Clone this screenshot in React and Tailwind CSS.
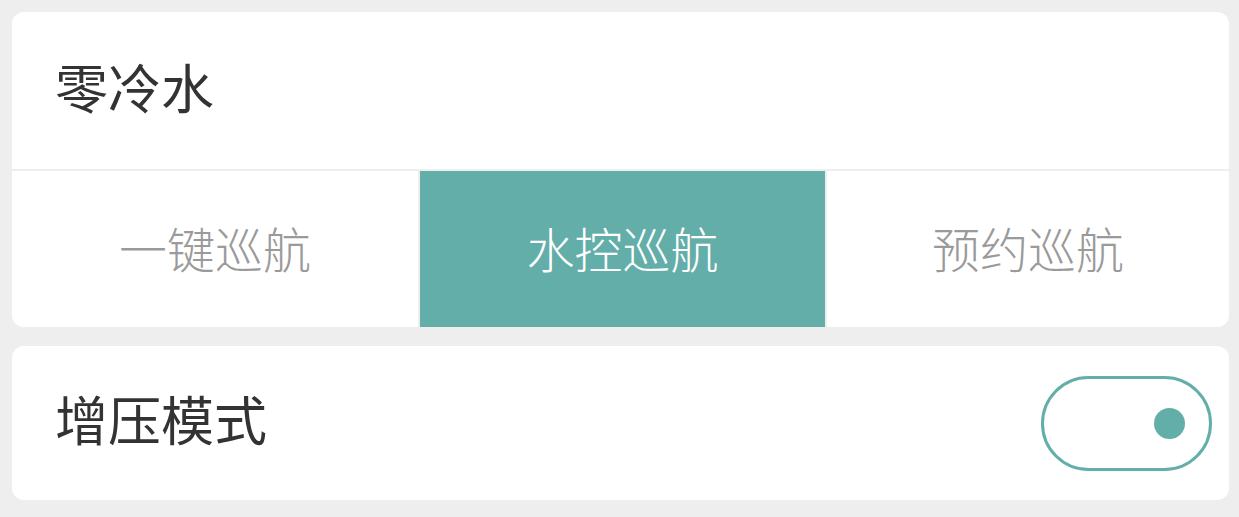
import { useState } from "react";

const TABS = ["一键巡航", "水控巡航", "预约巡航"];
const TAB_WIDTHS = ["w-[406px]", "w-[405px]", "flex-1"];

const font = { fontFamily: '"Noto Sans CJK SC", "Noto Sans", sans-serif' };

export default function App() {
  const [active, setActive] = useState(1);
  const [boost, setBoost] = useState(true);

  return (
    <div className="h-[517px] bg-[#eeeeee] pl-3 pr-[10px] pt-3" style={font}>
      {/* Zero cold water card */}
      <div className="rounded-xl bg-white overflow-hidden">
        <div className="h-[157px] flex items-center pl-[43px] pb-[9px]">
          <span className="text-[53px] leading-none text-[#333333]">零冷水</span>
        </div>
        <div className="h-[2px] bg-[#eeeeee]" />
        <div className="flex h-[156px] gap-[2px] bg-[#eeeeee]">
          {TABS.map((t, i) => (
            <button
              key={t}
              type="button"
              onClick={() => setActive(i)}
              className={`${TAB_WIDTHS[i]} flex items-center justify-center pb-[5px] text-[48px] font-light leading-none ${
                i === active ? "bg-[#63aea9] text-white" : "bg-white text-[#9a9a9a]"
              }`}
            >
              {t}
            </button>
          ))}
        </div>
      </div>

      {/* Boost mode card */}
      <div className="mt-[19px] h-[154px] rounded-xl bg-white flex items-center justify-between pl-[43px] pr-[17px]">
        <span className="text-[53px] leading-none text-[#333333] pb-[9px]">增压模式</span>
        <button
          type="button"
          onClick={() => setBoost(!boost)}
          className={`w-[171px] h-[95px] rounded-full border-[3px] border-[#63aea9] bg-white flex items-center px-[24px] ${
            boost ? "justify-end" : "justify-start"
          }`}
        >
          <span className="block w-[31px] h-[31px] rounded-full bg-[#63aea9]" />
        </button>
      </div>
    </div>
  );
}
